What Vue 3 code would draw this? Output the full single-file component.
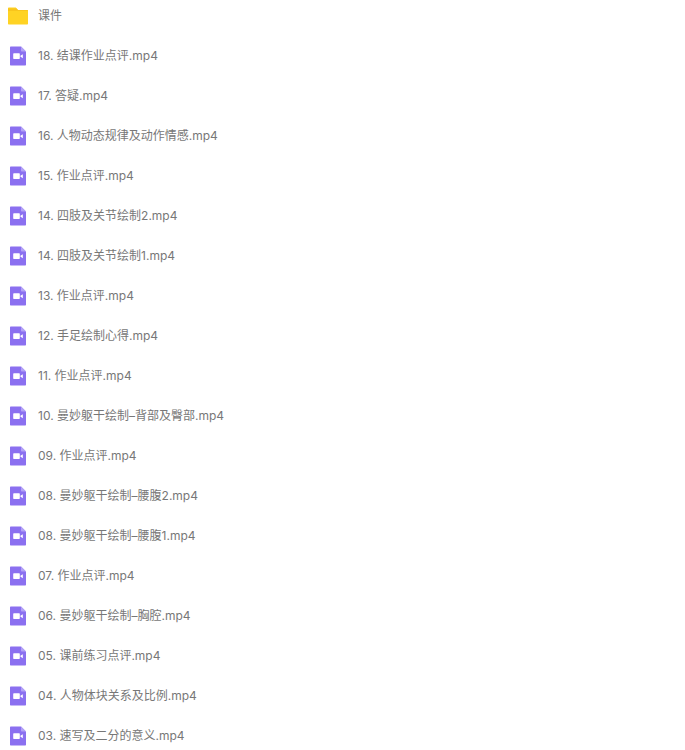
<template>
  <div class="file-list">
    <div v-for="file in files" :key="file.name" class="file-row">
      <svg v-if="file.type === 'folder'" class="icon" width="20" height="20" viewBox="0 0 20 20">
        <path d="M0 2.5C0 1.9.4 1.5 1 1.5h6.4c.3 0 .6.1.8.4L10 4h9c.6 0 1 .4 1 1v12.5c0 .6-.4 1-1 1H1c-.6 0-1-.4-1-1z" fill="#ffd324" />
        <path d="M0 5h20v-.2c0-.5-.4-.8-1-.8H10L8.6 2.6H0z" fill="#f9c51c" />
      </svg>
      <svg v-else class="icon" width="20" height="20" viewBox="0 0 20 20">
        <path d="M2 1.4C2 .8 2.4.4 3 .4h10L18 5.4v13.2c0 .6-.4 1-1 1H3c-.6 0-1-.4-1-1z" fill="#8b70f0" />
        <path d="M13 .4 18 5.4h-4c-.6 0-1-.4-1-1z" fill="#b3a2f6" />
        <rect x="5.2" y="7.2" width="6.6" height="5.8" rx=".7" fill="#fff" />
        <path d="M12.4 9.7 14.8 8.2v4L12.4 10.6z" fill="#fff" />
      </svg>
      <span class="file-name">{{ file.name }}</span>
    </div>
  </div>
</template>

<script setup>
const names = [
  "18. 结课作业点评.mp4",
  "17. 答疑.mp4",
  "16. 人物动态规律及动作情感.mp4",
  "15. 作业点评.mp4",
  "14. 四肢及关节绘制2.mp4",
  "14. 四肢及关节绘制1.mp4",
  "13. 作业点评.mp4",
  "12. 手足绘制心得.mp4",
  "11. 作业点评.mp4",
  "10. 曼妙躯干绘制–背部及臀部.mp4",
  "09. 作业点评.mp4",
  "08. 曼妙躯干绘制–腰腹2.mp4",
  "08. 曼妙躯干绘制–腰腹1.mp4",
  "07. 作业点评.mp4",
  "06. 曼妙躯干绘制–胸腔.mp4",
  "05. 课前练习点评.mp4",
  "04. 人物体块关系及比例.mp4",
  "03. 速写及二分的意义.mp4",
];

const files = [
  { name: "课件", type: "folder" },
  ...names.map((name) => ({ name, type: "video" })),
];
</script>

<style>
html,
body {
  margin: 0;
  background: #fff;
  overflow: hidden;
}
</style>

<style scoped>
.file-list {
  height: 750px;
  overflow: hidden;
  padding-left: 8px;
  font-family: "Inter", "Noto Sans CJK SC", sans-serif;
}

.file-row {
  display: flex;
  align-items: center;
  height: 40px;
  margin-top: -4px;
  margin-bottom: 4px;
}

.icon {
  flex: none;
  margin-right: 10px;
}

.file-name {
  font-size: 12px;
  line-height: 16px;
  color: #777;
  white-space: nowrap;
}
</style>
